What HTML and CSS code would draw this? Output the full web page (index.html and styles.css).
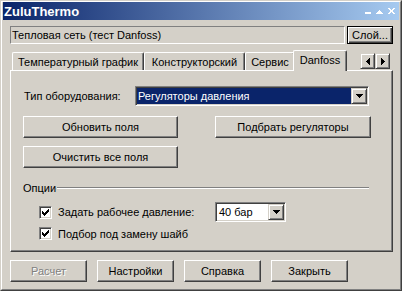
FILE: index.html
```html
<!DOCTYPE html>
<html>
<head>
<meta charset="utf-8">
<link rel="stylesheet" href="styles.css">
</head>
<body>
<div class="win">
  <div class="win-in">
    <div class="title">
      <span class="title-text">ZuluThermo</span>
      <svg class="title-btns" width="30" height="8" viewBox="0 0 30 8" shape-rendering="crispEdges">
        <path fill="#fff" d="M0 5h6v2h-6z"/>
        <path fill="#fff" d="M14 3h1v1h-1z M13 4h3v1h-3z M12 5h5v1h-5z M11 6h7v1h-7z"/>
        <path fill="#fff" d="M23 1h2v1h-2z M28 1h2v1h-2z M24 2h2v1h-2z M27 2h2v1h-2z M25 3h3v1h-3z M25 4h3v1h-3z M24 5h2v1h-2z M27 5h2v1h-2z M23 6h2v1h-2z M28 6h2v1h-2z"/>
      </svg>
    </div>
    <div class="body">
      <div class="layer-row">
        <div class="field">Тепловая сеть (тест Danfoss)</div>
        <div class="btn btn-default btn-layer">Слой...</div>
      </div>
      <div class="tabs">
        <div class="tab tab-w1">Температурный график</div>
        <div class="tab tab-w2">Конструкторский</div>
        <div class="tab tab-w3">Сервис</div>
        <div class="tab tab-sel">Danfoss</div>
        <div class="spin">
          <div class="sbtn">
            <svg width="4" height="7" viewBox="0 0 4 7" shape-rendering="crispEdges"><path d="M0 3h1v1h-1z M1 2h1v3h-1z M2 1h1v5h-1z M3 0h1v7h-1z"/></svg>
          </div>
          <div class="sbtn">
            <svg width="4" height="7" viewBox="0 0 4 7" shape-rendering="crispEdges"><path d="M3 3h1v1h-1z M2 2h1v3h-1z M1 1h1v5h-1z M0 0h1v7h-1z"/></svg>
          </div>
        </div>
      </div>
      <div class="pane">
        <div class="row-type">
          <span class="lbl-type">Тип оборудования:</span>
          <div class="combo combo-type">
            <div class="combo-val combo-val-sel">Регуляторы давления</div>
            <div class="combo-btn">
              <svg width="7" height="4" viewBox="0 0 7 4" shape-rendering="crispEdges"><path d="M0 0h7v1h-7z M1 1h5v1h-5z M2 2h3v1h-3z M3 3h1v1h-1z"/></svg>
            </div>
          </div>
        </div>
        <div class="row-btns">
          <div class="btn btn-wide">Обновить поля</div>
          <div class="btn btn-wide2">Подбрать регуляторы</div>
        </div>
        <div class="row-btns row-btns2">
          <div class="btn btn-wide">Очистить все поля</div>
        </div>
        <div class="group-head">
          <span class="group-text">Опции</span>
          <div class="group-line"></div>
        </div>
        <div class="chk-row chk-row1">
          <div class="chk">
            <svg width="7" height="7" viewBox="0 0 7 7" shape-rendering="crispEdges"><path d="M0 2h1v3h-1z M1 3h1v3h-1z M2 4h1v3h-1z M3 3h1v3h-1z M4 2h1v3h-1z M5 1h1v3h-1z M6 0h1v3h-1z"/></svg>
          </div>
          <span class="chk-lbl chk-lbl1">Задать рабочее давление:</span>
          <div class="combo combo-bar">
            <div class="combo-val">40 бар</div>
            <div class="combo-btn">
              <svg width="7" height="4" viewBox="0 0 7 4" shape-rendering="crispEdges"><path d="M0 0h7v1h-7z M1 1h5v1h-5z M2 2h3v1h-3z M3 3h1v1h-1z"/></svg>
            </div>
          </div>
        </div>
        <div class="chk-row chk-row2">
          <div class="chk">
            <svg width="7" height="7" viewBox="0 0 7 7" shape-rendering="crispEdges"><path d="M0 2h1v3h-1z M1 3h1v3h-1z M2 4h1v3h-1z M3 3h1v3h-1z M4 2h1v3h-1z M5 1h1v3h-1z M6 0h1v3h-1z"/></svg>
          </div>
          <span class="chk-lbl">Подбор под замену шайб</span>
        </div>
      </div>
      <div class="footer">
        <div class="btn btn-foot btn-disabled">Расчет</div>
        <div class="btn btn-foot">Настройки</div>
        <div class="btn btn-foot">Справка</div>
        <div class="btn btn-foot">Закрыть</div>
      </div>
    </div>
  </div>
</div>
</body>
</html>
```

FILE: styles.css
```css
* { box-sizing: border-box; }
html, body { margin: 0; padding: 0; background: #D4D0C8; }
body {
  font-family: "Liberation Sans", Arial, sans-serif;
  font-size: 11px;
  color: #000;
}
.win {
  width: 402px;
  height: 291px;
  border: 1px solid;
  border-color: #D4D0C8 #404040 #404040 #D4D0C8;
  background: #D4D0C8;
}
.win-in {
  height: 100%;
  border: 1px solid;
  border-color: #FFFFFF #808080 #808080 #FFFFFF;
  padding: 0 1px 1px 1px;
}
.title {
  height: 18px;
  background: linear-gradient(to right, #0A246A, #A6CAF0);
  display: flex;
  align-items: center;
  padding-left: 1px;
  padding-right: 4px;
}
.title-text {
  color: #fff;
  font-weight: bold;
  font-size: 13px;
  line-height: 18px;
  padding-top: 1px;
}
.title-btns { margin-left: auto; display: block; }

.body { padding: 6px 6px 0 7px; }

.layer-row { display: flex; height: 18px; }
.field {
  flex: 1;
  border: 1px solid;
  border-color: #808080 #FFFFFF #FFFFFF #808080;
  line-height: 16px;
  padding-left: 1px;
  white-space: nowrap;
}
.btn {
  display: flex;
  align-items: center;
  justify-content: center;
  border: 1px solid;
  border-color: #FFFFFF #404040 #404040 #FFFFFF;
  box-shadow: inset -1px -1px #808080;
  white-space: nowrap;
  flex-shrink: 0;
}
.btn-default {
  border-color: #000;
  box-shadow: inset 1px 1px #FFFFFF, inset -1px -1px #404040, inset -2px -2px #808080;
}
.btn-layer { width: 46px; margin-left: 2px; }

.tabs {
  display: flex;
  align-items: flex-end;
  height: 21px;
  margin-top: 6px;
  margin-bottom: -1px;
  padding-left: 2px;
  padding-right: 3px;
  position: relative;
  z-index: 2;
}
.tab {
  height: 18px;
  margin-bottom: 1px;
  border-top: 1px solid #FFFFFF;
  border-left: 1px solid #FFFFFF;
  border-right: 1px solid #404040;
  box-shadow: inset -1px 0 #808080;
  border-radius: 2px 2px 0 0;
  display: flex;
  align-items: center;
  justify-content: center;
  white-space: nowrap;
  padding-top: 1px;
}
.tab-w1 { width: 132px; }
.tab-w2 { width: 101px; }
.tab-w3 { width: 50px; }
.tab-sel {
  width: 54px;
  height: 21px;
  margin-bottom: 0;
  margin-left: -2px;
  background: #D4D0C8;
  padding-bottom: 3px;
}
.spin { display: flex; margin-left: auto; margin-bottom: 2px; }
.sbtn {
  width: 15px;
  height: 16px;
  border: 1px solid;
  border-color: #D4D0C8 #404040 #404040 #D4D0C8;
  box-shadow: inset 1px 1px #FFFFFF, inset -1px -1px #808080;
  display: flex;
  align-items: center;
  justify-content: center;
}
.sbtn svg { display: block; }

.pane {
  height: 182px;
  border: 1px solid;
  border-color: #FFFFFF #404040 #404040 #FFFFFF;
  box-shadow: inset -1px -1px #808080;
  padding: 15px 23px 0 12px;
  position: relative;
  z-index: 1;
}
.row-type { display: flex; align-items: center; height: 20px; }
.lbl-type { width: 112px; padding-left: 1px; flex-shrink: 0; }

.combo {
  display: flex;
  height: 20px;
  background: #fff;
  border: 1px solid;
  border-color: #808080 #FFFFFF #FFFFFF #808080;
  box-shadow: inset 1px 1px #404040, inset -1px -1px #D4D0C8;
  padding: 1px;
  flex-shrink: 0;
}
.combo-type { width: 234px; }
.combo-val {
  flex: 1;
  line-height: 16px;
  padding-left: 2px;
  white-space: nowrap;
}
.combo-val-sel { background: #0A246A; color: #fff; padding-left: 1px; }
.combo-btn {
  width: 16px;
  height: 16px;
  border: 1px solid;
  border-color: #D4D0C8 #404040 #404040 #D4D0C8;
  box-shadow: inset 1px 1px #FFFFFF, inset -1px -1px #808080;
  background: #D4D0C8;
  display: flex;
  align-items: center;
  justify-content: center;
}
.combo-btn svg { display: block; }

.row-btns { display: flex; margin-top: 10px; height: 22px; }
.row-btns2 { margin-top: 8px; }
.btn-wide { width: 155px; }
.btn-wide2 { width: 156px; margin-left: 37px; }

.group-head { display: flex; margin-top: 14px; height: 13px; }
.group-text { line-height: 13px; }
.group-line {
  flex: 1;
  margin-top: 5px;
  margin-left: 1px;
  height: 2px;
  border-top: 1px solid #808080;
  border-bottom: 1px solid #FFFFFF;
}

.chk-row { display: flex; align-items: center; padding-left: 16px; }
.chk-row1 { margin-top: 7px; height: 20px; }
.chk-row2 { margin-top: 5px; height: 13px; }
.chk {
  width: 13px;
  height: 13px;
  background: #fff;
  border: 1px solid;
  border-color: #808080 #FFFFFF #FFFFFF #808080;
  box-shadow: inset 1px 1px #404040, inset -1px -1px #D4D0C8;
  display: flex;
  align-items: center;
  justify-content: center;
  flex-shrink: 0;
}
.chk svg { display: block; }
.chk-lbl { margin-left: 6px; white-space: nowrap; }
.chk-lbl1 { width: 157px; }
.combo-bar { width: 71px; }

.footer { display: flex; gap: 10px; margin-top: 8px; }
.btn-foot { width: 77px; height: 22px; }
.btn-disabled { color: #808080; text-shadow: 1px 1px #FFFFFF; }
```
